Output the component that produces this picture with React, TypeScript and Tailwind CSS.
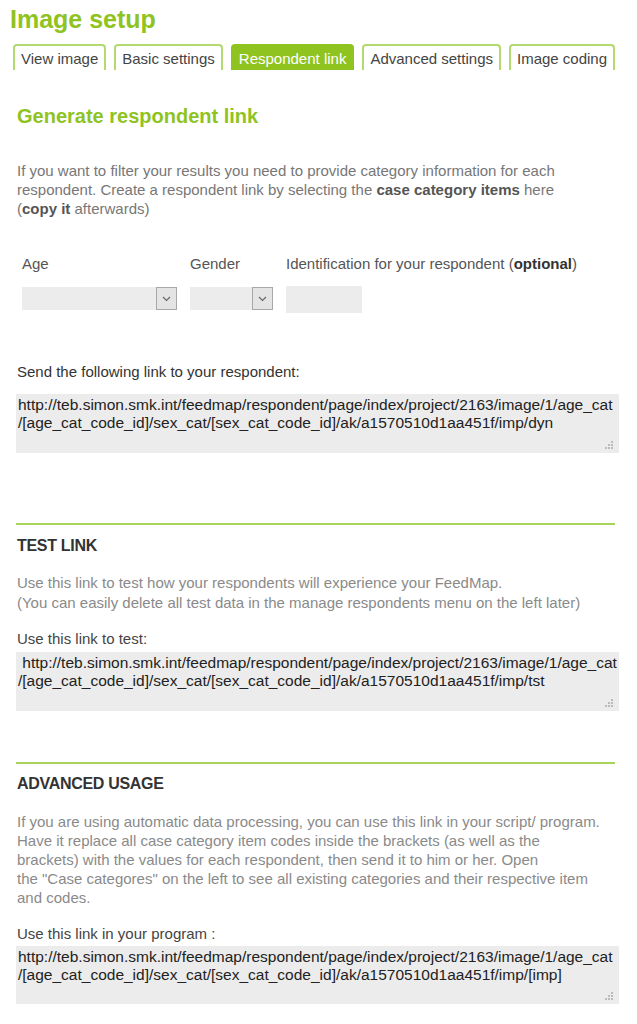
import React from "react";

const Chevron = () => (
  <svg width="9" height="6" viewBox="0 0 9 6" fill="none">
    <path d="M1 1 L4.5 4.5 L8 1" stroke="#666" strokeWidth="1.2" />
  </svg>
);

const Select = ({ w }: { w: string }) => (
  <div className={`${w} h-[23px] bg-[#ececec] flex justify-end`}>
    <div className="w-[21px] h-[23px] border border-[#a8a8a8] bg-[#e4e4e4] flex items-center justify-center">
      <Chevron />
    </div>
  </div>
);

const Grip = () => (
  <svg width="8" height="8" viewBox="0 0 8 8" className="absolute right-[6px] bottom-[4px]">
    <rect x="6" y="0" width="2" height="2" fill="#bbb" />
    <rect x="3" y="3" width="2" height="2" fill="#bbb" />
    <rect x="6" y="3" width="2" height="2" fill="#bbb" />
    <rect x="0" y="6" width="2" height="2" fill="#bbb" />
    <rect x="3" y="6" width="2" height="2" fill="#bbb" />
    <rect x="6" y="6" width="2" height="2" fill="#bbb" />
  </svg>
);

const LinkBox = ({ l1, l2, h }: { l1: string; l2: string; h: string }) => (
  <div className={`relative ml-[16px] w-[603px] ${h} bg-[#ececec] pt-[2px] pl-[2px] text-[15.5px] leading-[18px] text-[#222] whitespace-pre`}>
    <div>{l1}</div>
    <div>{l2}</div>
    <Grip />
  </div>
);

const Tab = ({ label, active }: { label: string; active?: boolean }) => (
  <div
    className={
      active
        ? "h-[26px] px-[6px] pt-[3px] border-2 border-b-0 border-[#8fc31f] bg-[#8fc31f] rounded-t-[4px] text-white leading-[20px]"
        : "h-[26px] px-[6px] pt-[3px] border-2 border-b-0 border-[#b3da70] bg-white rounded-t-[4px] text-[#444] leading-[20px]"
    }
  >
    {label}
  </div>
);

export default function App() {
  return (
    <div
      className="w-[637px] min-h-[1024px] bg-white text-[15px]"
      style={{ fontFamily: '"Liberation Sans", Arial, sans-serif' }}
    >
      <div className="pt-[5px] pl-[10px] text-[25px] leading-[28px] font-bold text-[#8fc31f]">Image setup</div>

      <div className="mt-[11px] pl-[13px] flex gap-[8px]">
        <Tab label="View image" />
        <Tab label="Basic settings" />
        <Tab label="Respondent link" active />
        <Tab label="Advanced settings" />
        <Tab label="Image coding" />
      </div>

      <div className="mt-[34px] pl-[17px] text-[20px] leading-[24px] font-bold text-[#8fc31f]">
        Generate respondent link
      </div>

      <p className="mt-[33px] pl-[17px] leading-[19px] text-[#777] whitespace-nowrap">
        If you want to filter your results you need to provide category information for each
        <br />
        respondent. Create a respondent link by selecting the <b className="text-[#555]">case category items</b> here
        <br />(<b className="text-[#555]">copy it</b> afterwards)
      </p>

      <div className="mt-[36px] pl-[22px] flex gap-[13px] text-[#555]">
        <div className="w-[155px]">
          <div className="leading-[19px]">Age</div>
          <div className="mt-[14px]">
            <Select w="w-[155px]" />
          </div>
        </div>
        <div className="w-[83px]">
          <div className="leading-[19px]">Gender</div>
          <div className="mt-[14px]">
            <Select w="w-[83px]" />
          </div>
        </div>
        <div>
          <div className="leading-[19px] whitespace-nowrap">
            Identification for your respondent (<b className="text-[#333]">optional</b>)
          </div>
          <div className="mt-[13px] w-[76px] h-[27px] bg-[#ececec]" />
        </div>
      </div>

      <div className="mt-[49px] pl-[17px] leading-[19px] text-[#333]">Send the following link to your respondent:</div>
      <div className="mt-[13px]">
        <LinkBox
          h="h-[59px]"
          l1="http://teb.simon.smk.int/feedmap/respondent/page/index/project/2163/image/1/age_cat"
          l2="/[age_cat_code_id]/sex_cat/[sex_cat_code_id]/ak/a1570510d1aa451f/imp/dyn"
        />
      </div>

      <div className="mt-[70px] ml-[16px] w-[599px] h-[2px] bg-[#a9d45a]" />
      <div className="mt-[11px] pl-[17px] text-[16px] leading-[19px] font-bold text-[#333] tracking-[-0.3px]">TEST LINK</div>
      <p className="mt-[18px] pl-[17px] leading-[20px] text-[#8a8a8a] whitespace-nowrap">
        Use this link to test how your respondents will experience your FeedMap.
        <br />
        (You can easily delete all test data in the manage respondents menu on the left later)
      </p>
      <div className="mt-[16px] pl-[17px] leading-[19px] text-[#444]">Use this link to test:</div>
      <div className="mt-[4px]">
        <LinkBox
          h="h-[59px]"
          l1=" http://teb.simon.smk.int/feedmap/respondent/page/index/project/2163/image/1/age_cat"
          l2="/[age_cat_code_id]/sex_cat/[sex_cat_code_id]/ak/a1570510d1aa451f/imp/tst"
        />
      </div>

      <div className="mt-[51px] ml-[16px] w-[599px] h-[2px] bg-[#a9d45a]" />
      <div className="mt-[10px] pl-[17px] text-[16px] leading-[19px] font-bold text-[#333] tracking-[-0.3px]">ADVANCED USAGE</div>
      <p className="mt-[19px] pl-[17px] leading-[19px] text-[#8a8a8a] whitespace-nowrap">
        If you are using automatic data processing, you can use this link in your script/ program.
        <br />
        Have it replace all case category item codes inside the brackets (as well as the
        <br />
        brackets) with the values for each respondent, then send it to him or her. Open
        <br />
        the "Case categores" on the left to see all existing categories and their respective item
        <br />
        and codes.
      </p>
      <div className="mt-[17px] pl-[17px] leading-[19px] text-[#444]">Use this link in your program :</div>
      <div className="mt-[3px]">
        <LinkBox
          h="h-[58px]"
          l1="http://teb.simon.smk.int/feedmap/respondent/page/index/project/2163/image/1/age_cat"
          l2="/[age_cat_code_id]/sex_cat/[sex_cat_code_id]/ak/a1570510d1aa451f/imp/[imp]"
        />
      </div>
    </div>
  );
}
